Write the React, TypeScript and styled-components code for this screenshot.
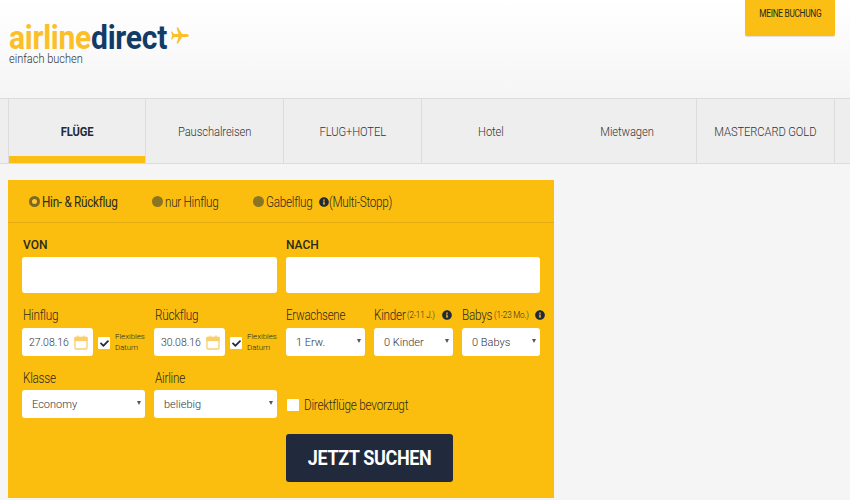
import React from 'react';
import styled, { createGlobalStyle } from 'styled-components';
import { FaInfoCircle, FaCheck } from 'react-icons/fa';

const Global = createGlobalStyle`
  html, body { margin: 0; padding: 0; background: #f5f5f6; }
  body { font-family: Roboto, "Liberation Sans", sans-serif; width: 850px; height: 500px; overflow: hidden; }
  * { box-sizing: border-box; }
`;

const Page = styled.div`display: flex; flex-direction: column; width: 850px; height: 500px;`;

/* Reference type is set in a narrow cut: squeeze the glyphs, keep the given layout width. */
const Narrow = styled.span<{ $w?: number; $s?: number }>`
  display: inline-block;
  flex: none;
  white-space: nowrap;
  ${p => (p.$w ? `width: ${p.$w}px;` : '')}
  transform: scaleX(${p => p.$s ?? 0.85});
  transform-origin: ${p => (p.$w ? 'left' : 'center')} center;
`;

const Header = styled.header`
  height: 98px;
  padding-left: 9px;
  display: flex;
  justify-content: space-between;
  align-items: flex-start;
  background: linear-gradient(#ffffff, #f5f5f6);
`;
const Logo = styled.div`display: flex; flex-direction: column; padding-top: 19px;`;
const LogoLine = styled.div`
  display: flex;
  align-items: flex-start;
  height: 33px;
  font-weight: 700;
  font-size: 33px;
  line-height: 38px;
  letter-spacing: -0.3px;
`;
const LogoYellow = styled.span`color: #fbbf2a;`;
const LogoBlue = styled.span`color: #123c66;`;
const PlaneSvg = styled.svg`margin: 8px 0 0 4px; flex: none;`;
const Tagline = styled.div`font-size: 12.5px; font-weight: 300; color: #333; line-height: 14px;`;
const BookingButton = styled.a`
  width: 90px;
  height: 36px;
  margin-right: 15px;
  background: #fbbe14;
  border-radius: 0 0 2px 2px;
  box-shadow: 0 1px 1px rgba(0,0,0,.12);
  color: #2a2a20;
  font-size: 10px;
  letter-spacing: -0.35px;
  line-height: 28px;
  text-align: center;
`;

const Tabs = styled.nav`
  height: 66px;
  padding-left: 8px;
  display: flex;
  background: #eeeeef;
  border-top: 1px solid #dcdcdc;
  border-bottom: 1px solid #dcdcdc;
`;
const Tab = styled.div<{ $active?: boolean; $noBorder?: boolean; $w: number }>`
  width: ${p => p.$w}px;
  height: 64px;
  display: flex;
  align-items: center;
  justify-content: center;
  font-size: 13px;
  letter-spacing: -0.1px;
  font-weight: ${p => (p.$active ? 700 : 300)};
  color: ${p => (p.$active ? '#1f2a3c' : '#333')};
  border-left: ${p => (p.$noBorder ? '0' : '1px solid #dcdcdc')};
  box-shadow: ${p => (p.$active ? 'inset 0 -7px 0 #fbbe14' : 'none')};
`;
const TabsEnd = styled.div`width: 1px; height: 64px; background: #dcdcdc;`;

const Panel = styled.form`
  width: 546px;
  height: 318px;
  margin: 16px 0 0 8px;
  background: #fbbe0f;
`;
const TripRow = styled.div`
  height: 43px;
  padding: 1px 0 0 21px;
  display: flex;
  align-items: center;
  border-bottom: 1px solid #e6ad12;
  font-size: 14px;
  font-weight: 300;
  letter-spacing: -0.35px;
  color: #2b2a1e;
`;
const TripOption = styled.label<{ $w: number; $strong?: boolean }>`
  width: ${p => p.$w}px;
  display: flex;
  align-items: center;
  gap: 2px;
  font-weight: ${p => (p.$strong ? 400 : 300)};
`;
const Radio = styled.span<{ $on?: boolean }>`
  flex: none;
  width: 11px;
  height: 11px;
  border-radius: 50%;
  background: ${p => (p.$on ? '#fbc93a' : '#8a7522')};
  border: ${p => (p.$on ? '3px solid #7d6a20' : '0')};
`;
const TripInfo = styled(FaInfoCircle)`color: #1f2a3c; font-size: 10px; margin: 0 0 0 6px;`;

const Fields = styled.div`padding: 14px 14px 0;`;
const TwoCols = styled.div`display: grid; grid-template-columns: 255px 254px; column-gap: 9px;`;
const StrongLabel = styled.div<{ $flush?: boolean }>`
  font-size: 12px;
  font-weight: 500;
  line-height: 16px;
  margin-left: ${p => (p.$flush ? 0 : 1)}px;
  color: #2b2a1e;
`;
const TextInput = styled.input`
  display: block;
  width: 100%;
  height: 36px;
  margin-top: 4px;
  border: 0;
  border-radius: 3px;
  background: #fff;
`;
const DetailRow = styled.div`
  display: grid;
  grid-template-columns: 123px 123px 79px 79px 78px;
  column-gap: 9px;
  margin-top: 12px;
`;
const Column = styled.div`display: flex; flex-direction: column; min-width: 0;`;
const FieldLabel = styled.div<{ $short?: boolean; $flush?: boolean }>`
  height: ${p => (p.$short ? 22 : 23)}px;
  padding-bottom: ${p => (p.$short ? 2 : 3)}px;
  display: flex;
  align-items: center;
  margin-left: ${p => (p.$flush ? 0 : 1)}px;
  white-space: nowrap;
  font-size: 14px;
  font-weight: 300;
  letter-spacing: -0.3px;
  color: #2b2a1e;
`;
const SmallNote = styled.small`font-size: 9px; letter-spacing: -0.2px;`;
const LabelInfo = styled(FaInfoCircle)<{ $pull?: number }>`
  color: #1f2a3c;
  font-size: 10px;
  flex: none;
  margin-left: auto;
  margin-right: ${p => p.$pull ?? 0}px;
`;
const DateLine = styled.div`display: flex; align-items: center;`;
const DateBox = styled.div`
  width: 71px;
  height: 28px;
  padding: 0 5px 0 7px;
  display: flex;
  align-items: center;
  justify-content: space-between;
  background: #fff;
  border-radius: 3px;
  font-size: 11px;
  font-weight: 300;
  color: #333;
`;
const CheckBox = styled.span`
  flex: none;
  width: 12px;
  height: 12px;
  display: flex;
  align-items: center;
  justify-content: center;
  background: #fff;
  border-radius: 1px;
  color: #1f2a3c;
  font-size: 9px;
`;
const DateCheck = styled(CheckBox)`margin: 2px 5px 0;`;
const FlexText = styled.div`
  font-size: 8px;
  line-height: 11px;
  font-weight: 300;
  letter-spacing: -0.1px;
  color: #2b2a1e;
`;
const SelectBox = styled.div`
  position: relative;
  height: 28px;
  &::after {
    content: '';
    position: absolute;
    right: 4px;
    top: 11px;
    border-left: 2.5px solid transparent;
    border-right: 2.5px solid transparent;
    border-top: 4px solid #555;
    pointer-events: none;
  }
`;
const Select = styled.select`
  appearance: none;
  display: block;
  width: 100%;
  height: 28px;
  padding-left: 10px;
  border: 0;
  border-radius: 3px;
  background: #fff;
  font-family: Roboto, sans-serif;
  font-size: 11px;
  font-weight: 300;
  color: #333;
`;
const BottomRow = styled.div`
  display: grid;
  grid-template-columns: 123px 123px 1fr;
  column-gap: 9px;
  margin-top: 12px;
`;
const DirectLine = styled.label`
  display: flex;
  align-items: center;
  gap: 5px;
  padding: 24px 0 0 1px;
  height: 50px;
  font-size: 14px;
  font-weight: 300;
  letter-spacing: -0.3px;
  color: #2b2a1e;
`;
const SearchRow = styled.div`margin: 16px 0 0 264px;`;
const SearchButton = styled.button`
  width: 167px;
  height: 48px;
  border: 0;
  border-radius: 3px;
  background: #202a3c;
  color: #fff;
  font-family: Roboto, sans-serif;
  font-size: 20px;
  font-weight: 700;
  letter-spacing: -0.4px;
`;

const CalendarIcon = () => (
  <svg width="14" height="15" viewBox="0 0 14 15" fill="none" stroke="#f9cf6c" strokeWidth="1.3">
    <rect x="1" y="2.5" width="12" height="11.5" rx="1" />
    <rect x="1" y="2.5" width="12" height="3" fill="#f9cf6c" />
    <path d="M4 0.5v3M10 0.5v3" />
  </svg>
);

const PlaneIcon = () => (
  <PlaneSvg width="18" height="17" viewBox="0 0 18 17">
    <path
      fill="#fbbf2a"
      d="M18 8.5C18 7.5 16 7 14 7L11 7 7 .5 5.5 .5 7.5 7 3 7 1 4.5 0 4.5 1.2 8.5 0 12.5 1 12.5 3 10 7.5 10 5.5 16.5 7 16.5 11 10 14 10C16 10 18 9.5 18 8.5Z"
    />
  </PlaneSvg>
);

const tabs = [
  { label: 'FLÜGE', w: 137, active: true },
  { label: 'Pauschalreisen', w: 138 },
  { label: 'FLUG+HOTEL', w: 138 },
  { label: 'Hotel', w: 138 },
  { label: 'Mietwagen', w: 137, noBorder: true },
  { label: 'MASTERCARD GOLD', w: 138 },
];

const FlexLabel = () => (
  <FlexText>Flexibles<br />Datum</FlexText>
);

export default function App() {
  return (
    <Page>
      <Global />
      <Header>
        <Logo>
          <LogoLine>
            <Narrow $w={158} $s={0.91}>
              <LogoYellow>airline</LogoYellow>
              <LogoBlue>direct</LogoBlue>
            </Narrow>
            <PlaneIcon />
          </LogoLine>
          <Tagline><Narrow $w={74} $s={0.88}>einfach buchen</Narrow></Tagline>
        </Logo>
        <BookingButton><Narrow $s={0.83}>MEINE BUCHUNG</Narrow></BookingButton>
      </Header>
      <Tabs>
        {tabs.map(t => (
          <Tab key={t.label} $w={t.w} $active={t.active} $noBorder={t.noBorder}>
            <Narrow $s={0.86}>{t.label}</Narrow>
          </Tab>
        ))}
        <TabsEnd />
      </Tabs>
      <Panel>
        <TripRow>
          <TripOption $w={123} $strong><Radio $on /><Narrow $w={76} $s={0.84}>Hin- &amp; Rückflug</Narrow></TripOption>
          <TripOption $w={101}><Radio /><Narrow $w={54} $s={0.84}>nur Hinflug</Narrow></TripOption>
          <TripOption $w={60}><Radio /><Narrow $w={46} $s={0.84}>Gabelflug</Narrow></TripOption>
          <TripInfo /><Narrow $w={64} $s={0.84}>(Multi-Stopp)</Narrow>
        </TripRow>
        <Fields>
          <TwoCols>
            <div><StrongLabel>VON</StrongLabel><TextInput /></div>
            <div><StrongLabel $flush>NACH</StrongLabel><TextInput /></div>
          </TwoCols>
          <DetailRow>
            <Column>
              <FieldLabel><Narrow $w={35} $s={0.84}>Hinflug</Narrow></FieldLabel>
              <DateLine>
                <DateBox><Narrow $w={42} $s={0.95}>27.08.16</Narrow><CalendarIcon /></DateBox>
                <DateCheck><FaCheck /></DateCheck>
                <FlexLabel />
              </DateLine>
            </Column>
            <Column>
              <FieldLabel><Narrow $w={42} $s={0.84}>Rückflug</Narrow></FieldLabel>
              <DateLine>
                <DateBox><Narrow $w={42} $s={0.95}>30.08.16</Narrow><CalendarIcon /></DateBox>
                <DateCheck><FaCheck /></DateCheck>
                <FlexLabel />
              </DateLine>
            </Column>
            <Column>
              <FieldLabel $flush><Narrow $w={59} $s={0.82}>Erwachsene</Narrow></FieldLabel>
              <SelectBox><Select defaultValue="1"><option value="1">1 Erw.</option></Select></SelectBox>
            </Column>
            <Column>
              <FieldLabel $flush>
                <Narrow $w={33} $s={0.84}>Kinder</Narrow>
                <SmallNote><Narrow $w={28} $s={0.9}>(2-11 J.)</Narrow></SmallNote>
                <LabelInfo $pull={1} />
              </FieldLabel>
              <SelectBox><Select defaultValue="0"><option value="0">0 Kinder</option></Select></SelectBox>
            </Column>
            <Column>
              <FieldLabel $flush>
                <Narrow $w={32} $s={0.84}>Babys</Narrow>
                <SmallNote><Narrow $w={36} $s={0.9}>(1-23 Mo.)</Narrow></SmallNote>
                <LabelInfo $pull={-5} />
              </FieldLabel>
              <SelectBox><Select defaultValue="0"><option value="0">0 Babys</option></Select></SelectBox>
            </Column>
          </DetailRow>
          <BottomRow>
            <Column>
              <FieldLabel $short><Narrow $w={34} $s={0.84}>Klasse</Narrow></FieldLabel>
              <SelectBox><Select defaultValue="e"><option value="e">Economy</option></Select></SelectBox>
            </Column>
            <Column>
              <FieldLabel $short><Narrow $w={32} $s={0.84}>Airline</Narrow></FieldLabel>
              <SelectBox><Select defaultValue="b"><option value="b">beliebig</option></Select></SelectBox>
            </Column>
            <DirectLine><CheckBox /><Narrow $w={104} $s={0.84}>Direktflüge bevorzugt</Narrow></DirectLine>
          </BottomRow>
          <SearchRow><SearchButton type="button"><Narrow $s={0.9}>JETZT SUCHEN</Narrow></SearchButton></SearchRow>
        </Fields>
      </Panel>
    </Page>
  );
}
